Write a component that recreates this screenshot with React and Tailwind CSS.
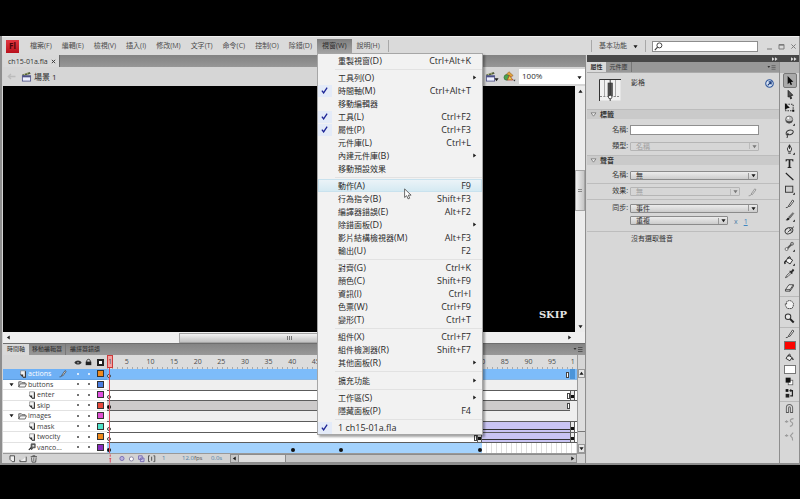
import React from "react";

const FONT = "font-['Open_Sans','Noto_Sans_CJK_TC',sans-serif]";

/* ---------- menu data ---------- */

const topMenus = [
  ["檔案", "(F)"],
  ["編輯", "(E)"],
  ["檢視", "(V)"],
  ["插入", "(I)"],
  ["修改", "(M)"],
  ["文字", "(T)"],
  ["命令", "(C)"],
  ["控制", "(O)"],
  ["除錯", "(D)"],
  ["視窗", "(W)"],
  ["說明", "(H)"],
];

const windowMenu = [
  { items: [{ t: "重製視窗", k: "(D)", s: "Ctrl+Alt+K" }] },
  {
    items: [
      { t: "工具列", k: "(O)", sub: true },
      { t: "時間軸", k: "(M)", s: "Ctrl+Alt+T", on: true },
      { t: "移動編輯器" },
      { t: "工具", k: "(L)", s: "Ctrl+F2", on: true },
      { t: "屬性", k: "(P)", s: "Ctrl+F3", on: true },
      { t: "元件庫", k: "(L)", s: "Ctrl+L" },
      { t: "內建元件庫", k: "(B)", sub: true },
      { t: "移動預設效果" },
    ],
  },
  {
    items: [
      { t: "動作", k: "(A)", s: "F9", hot: true },
      { t: "行為指令", k: "(B)", s: "Shift+F3" },
      { t: "編譯器錯誤", k: "(E)", s: "Alt+F2" },
      { t: "除錯面板", k: "(D)", sub: true },
      { t: "影片結構檢視器", k: "(M)", s: "Alt+F3" },
      { t: "輸出", k: "(U)", s: "F2" },
    ],
  },
  {
    items: [
      { t: "對齊", k: "(G)", s: "Ctrl+K" },
      { t: "顏色", k: "(C)", s: "Shift+F9" },
      { t: "資訊", k: "(I)", s: "Ctrl+I" },
      { t: "色票", k: "(W)", s: "Ctrl+F9" },
      { t: "變形", k: "(T)", s: "Ctrl+T" },
    ],
  },
  {
    items: [
      { t: "組件", k: "(X)", s: "Ctrl+F7" },
      { t: "組件檢測器", k: "(R)", s: "Shift+F7" },
      { t: "其他面板", k: "(R)", sub: true },
    ],
  },
  { tall: true, items: [{ t: "擴充功能", sub: true }] },
  {
    items: [
      { t: "工作區", k: "(S)", sub: true },
      { t: "隱藏面板", k: "(P)", s: "F4" },
    ],
  },
  { items: [{ t: "", k: "1 ch15-01a.fla", on: true }] },
];

/* ---------- small drawings ---------- */

function Tri({ dir = "right", className = "" }) {
  const d = {
    right: "M1.5 0.5 L5 3 L1.5 5.5Z",
    left: "M4.5 0.5 L1 3 L4.5 5.5Z",
    down: "M0.5 1.5 H5.5 L3 5Z",
    up: "M0.5 4.5 H5.5 L3 1Z",
  }[dir];
  return (
    <svg viewBox="0 0 6 6" className={"h-[5px] w-[5px] shrink-0 fill-[#1c1c1c] " + className}>
      <path d={d} />
    </svg>
  );
}

function Clapper({ className = "" }) {
  return (
    <svg viewBox="0 0 12 12" className={"h-[11px] w-[11px] shrink-0 " + className}>
      <path d="M1 4 L9.5 1 L10.5 3 L2 5.6Z" fill="#55603c" />
      <path d="M3 3.4 L4.6 4.6 M6 2.3 L7.6 3.6" stroke="#cdd58a" strokeWidth="1" />
      <rect x="1.5" y="5.2" width="9" height="5.8" fill="#eef0ff" stroke="#4b4f86" strokeWidth="0.9" />
      <rect x="1.5" y="5.2" width="9" height="1.7" fill="#4b4f86" />
    </svg>
  );
}

function Shapes() {
  return (
    <svg viewBox="0 0 14 12" className="h-[11px] w-[13px] shrink-0">
      <path d="M6.4 0.8 L11 5 L6.4 8 L2.6 4.6Z" fill="#e0a23c" stroke="#8c5a26" strokeWidth="0.6" />
      <circle cx="4" cy="7" r="3" fill="#4da34d" stroke="#2c6a35" strokeWidth="0.7" />
      <path d="M7 4.8 L10.6 9.8 H4.6Z" fill="#e2d84a" stroke="#b5432c" strokeWidth="0.9" />
      <path d="M11 9.6 h2.6 l-1.3 1.8Z" fill="#333" />
    </svg>
  );
}

function Sheet() {
  return (
    <svg viewBox="0 0 10 10" className="h-[8px] w-[8px] shrink-0">
      <path d="M2 1 H8 V9 H5 L2 6Z" fill="#f4f4f4" stroke="#777" strokeWidth="0.8" />
      <path d="M1 5.5 H5.2 V9.3Z" fill="#333" />
      <path d="M8 1.5 V9 H5" fill="none" stroke="#333" strokeWidth="1.3" />
    </svg>
  );
}

function Folder() {
  return (
    <svg viewBox="0 0 12 10" className="h-[8px] w-[9px] shrink-0">
      <path d="M1 9 V2 H4.5 L5.5 3.2 H9.5 V5" fill="#ddd" stroke="#444" strokeWidth="1" />
      <path d="M1 9 L3 4.8 H11.3 L9.5 9Z" fill="#f7f7f7" stroke="#444" strokeWidth="1" />
    </svg>
  );
}

function MaskIcon() {
  return (
    <svg viewBox="0 0 10 10" className="h-[8px] w-[8px] shrink-0">
      <path d="M4 1 H9 V6 H6.5 L4.5 8.5 L3.5 7.4Z" fill="#666" stroke="#333" strokeWidth="0.8" />
      <path d="M5.5 2.5 H7.8 V4.6 H5.5Z" fill="#ddd" />
      <path d="M1 8.7 L4 5.8" stroke="#222" strokeWidth="1.4" />
    </svg>
  );
}

const PencilPath = (
  <>
    <path d="M2 10.5 C4 10.5 5 9.5 6 8" fill="none" stroke="#333" strokeWidth="0.9" />
    <path d="M5 8.5 L9.3 2.2 L10.8 3.3 L6.4 9.2Z" fill="#e9e9e9" stroke="#333" strokeWidth="0.9" />
  </>
);

/* ---------- tool icons ---------- */

const corner = <path d="M9.6 11.6 H11.8 V9.4Z" fill="#111" />;
const toolGroups = [
  {
    cls: "h-[67px]",
    items: [
      ["選取", <path d="M4 1 V10 L6 8.2 L7.3 11 L8.8 10.3 L7.6 7.6 L10.2 7.4Z" fill="#0c0c0c" />],
      ["部分選取", <path d="M4.5 1.5 V8.8 L6 7.6 L7.2 10.8 L8.3 10.3 L7.2 7.2 L9.6 6.8Z" fill="#555" stroke="#222" strokeWidth="1" />],
      ["任意變形", <><rect x="2" y="2.5" width="8" height="7" fill="none" stroke="#333" strokeWidth="1.2" strokeDasharray="1.6 1.2" /><path d="M1 1 V8.6 L3 7 L6.4 6.4Z" fill="#111" /><rect x="9" y="8.4" width="2.2" height="2.2" fill="#111" /></>],
      ["3D 旋轉", <><circle cx="5.6" cy="5" r="3.9" fill="#bbb" stroke="#555" strokeWidth="0.8" /><path d="M2 5.4 C4 7.4 7.4 7.4 9.4 5.4 C9.2 8 7.6 8.9 5.6 8.9 C3.6 8.9 2.2 7.4 2 5.4Z" fill="#444" /><circle cx="4.6" cy="3.4" r="1.1" fill="#fff" />{corner}</>],
      ["套索", <path d="M3.2 10.8 C3.6 9.4 4.6 8.6 3.2 7.8 C1.6 7 2 3.4 5.4 2.4 C8.6 1.6 10.6 2.8 10 4.8 C9.4 6.8 6 8 4 7.2 C3.2 6.4 4.6 5.8 5 7" fill="none" stroke="#333" strokeWidth="1.1" />],
    ],
  },
  {
    cls: "h-[94px]",
    items: [
      ["鋼筆", <><path d="M6 0.8 L8.4 5.4 L7.2 8.4 H4.8 L3.6 5.4Z" fill="#ddd" stroke="#222" strokeWidth="0.9" /><path d="M6 1 V5.4 M4.6 10 H7.4" stroke="#222" strokeWidth="1" />{corner}</>],
      ["文字", <path d="M1.8 1.4 H10.2 V3.8 H9.4 C9.2 2.8 8.8 2.4 7.8 2.4 H6.9 V9.4 C6.9 10 7.3 10.2 8.2 10.3 V10.9 H3.8 V10.3 C4.7 10.2 5.1 10 5.1 9.4 V2.4 H4.2 C3.2 2.4 2.8 2.8 2.6 3.8 H1.8Z" fill="#222" />],
      ["線段", <path d="M2 2.2 L10.2 9.8" stroke="#222" strokeWidth="1.2" />],
      ["矩形", <><rect x="1.6" y="2.4" width="8" height="6.6" fill="#cfcfcf" stroke="#333" strokeWidth="1" />{corner}</>],
      ["鉛筆", PencilPath],
      ["筆刷", <><path d="M1.6 9.8 C3 9.8 3 7.4 4.8 7 L6.2 8.4 C5.6 10.2 3.4 10.8 1.6 9.8Z" fill="#222" /><path d="M5.2 6.6 L9.6 1.8 L10.6 2.8 L6.6 7.8Z" fill="#888" stroke="#333" strokeWidth="0.6" />{corner}</>],
      ["裝飾", <><ellipse cx="5.4" cy="6.2" rx="4.4" ry="3.2" transform="rotate(-25 5.4 6.2)" fill="#ddd" stroke="#333" strokeWidth="1" /><path d="M4 8 L10.8 1.8 M6 3.2 L8 7" stroke="#333" strokeWidth="1" /></>],
    ],
  },
  {
    cls: "h-[54px]",
    items: [
      ["骨塊", <><path d="M2.4 9.4 L8.6 3.2" stroke="#555" strokeWidth="2" /><circle cx="2.8" cy="8.8" r="1.6" fill="#eee" stroke="#555" strokeWidth="0.8" /><circle cx="8.8" cy="3" r="1.6" fill="#aaa" stroke="#555" strokeWidth="0.8" />{corner}</>],
      ["油漆桶", <><path d="M4.6 2.4 L9.4 5.6 L6.6 9.8 L2 6.8Z" fill="#f4f4f4" stroke="#222" strokeWidth="1" /><path d="M2.4 6.4 C0.6 6.8 0.6 8.6 1.4 9.8" fill="none" stroke="#111" strokeWidth="1.5" /><path d="M5 4.4 C5 1 7 0.8 7.2 3.8" fill="none" stroke="#222" strokeWidth="0.9" />{corner}</>],
      ["滴管", <><path d="M1.6 10.6 L3 8 L6.8 4.4 L8 5.6 L4.2 9.4Z" fill="#ddd" stroke="#333" strokeWidth="0.8" /><path d="M6.2 3.6 L8.2 3.6 L9.6 1.4 L11 2.6 L8.8 4.4 L8.8 6.2Z" fill="#222" stroke="#222" strokeWidth="0.8" /></>],
      ["橡皮擦", <path d="M1.6 8.4 L5.4 3 H10.2 L6.6 8.4Z M1.6 8.4 V10 H6.6 L10.2 4.8 V3 M6.6 8.4 V10" fill="#f0f0f0" stroke="#333" strokeWidth="0.9" />],
    ],
  },
  {
    cls: "h-[28px]",
    items: [
      ["手形", <path d="M3.6 10.4 L1.6 7.2 L1.4 5.2 L2.8 5.6 L2.8 3 L4.2 2.4 L5.4 1.6 L6.8 1.8 L8.2 2.4 L9.6 3.6 L10.4 5 L10 8 L8.6 10.4Z" fill="#f2f2f2" stroke="#444" strokeWidth="1" strokeDasharray="1.8 0.5" />],
      ["縮放顯示", <><circle cx="4.4" cy="4.2" r="3" fill="#e8e8e8" stroke="#333" strokeWidth="1.1" /><path d="M6.6 6.4 L10.6 10.4" stroke="#222" strokeWidth="2.2" /></>],
    ],
  },
  {
    cls: "h-[71px]",
    items: [
      ["筆畫顏色", PencilPath],
      ["筆畫色票", "bg-[#fb0400]"],
      ["填色", <><path d="M4.6 3.4 L8.8 6 L6.4 9.6 L2.2 7Z" fill="#eee" stroke="#222" strokeWidth="1" /><path d="M9.4 5.6 L10.8 8.8 L8.6 8.2Z" fill="#222" /><path d="M5 5 C5 1.4 7 1.4 7 4.6" fill="none" stroke="#222" strokeWidth="0.9" /></>],
      ["填色色票", "bg-white"],
      ["黑白", <><rect x="4.6" y="4.6" width="5" height="5" fill="#fff" stroke="#555" strokeWidth="0.8" /><rect x="1.8" y="1.8" width="5.4" height="5.4" fill="#111" /></>],
      ["交換顏色", <><rect x="1.8" y="1.2" width="3" height="3" fill="#111" /><rect x="1.8" y="6.4" width="4" height="4" fill="#222" /><path d="M6 2.8 H9.2 V8.6 H6.8 M7.4 1.4 V4.2" fill="none" stroke="#222" strokeWidth="1.3" /></>],
    ],
  },
  {
    cls: "h-[41px]",
    items: [
      ["貼齊物件", <><path d="M2.6 10.4 V5 C2.6 0.6 9.4 0.6 9.4 5 V10.4 M5 10.4 V5.4 C5 3.8 7 3.8 7 5.4 V10.4" fill="none" stroke="#666" strokeWidth="1.1" /><path d="M2.2 10.4 H5.2 M6.8 10.4 H9.8" stroke="#555" strokeWidth="1.2" /></>],
      ["平滑", <path d="M1 5 H4.6 M2.8 3.6 V6.4 M10.4 1.8 C5.6 2.4 6.4 5 8.4 5.8 C10.4 7 9.6 9.6 6.4 10.2" fill="none" stroke="#9c9c9c" strokeWidth="1.2" />],
      ["拉直", <path d="M1 5 H4.6 M2.8 3.6 V6.4 M10 1.8 L7 5.2 L9 7.4 L9.4 10.4" fill="none" stroke="#9c9c9c" strokeWidth="1.2" />],
    ],
  },
];

/* ---------- window menu ---------- */

function WindowMenu() {
  return (
    <div
      role="menu"
      aria-label="視窗"
      className="absolute left-0 top-full z-20 w-[166px] border border-[#a6a6a6] bg-[#f2f2f2] shadow-[2px_2px_2px_rgba(0,0,0,0.35)]"
    >
      {windowMenu.map((g, gi) => (
        <div key={gi}>
          {gi > 0 && (
            <div className={(g.tall ? "h-[5px]" : "h-[4px]") + " flex items-center pl-[17px]"}>
              <hr className="w-full border-t border-[#e2e2e2]" />
            </div>
          )}
          {g.items.map((it) => (
            <button
              key={it.t}
              type="button"
              role={it.on ? "menuitemcheckbox" : "menuitem"}
              aria-checked={it.on ? true : undefined}
              className={
                "flex h-[13px] w-full items-center pr-[4px] text-left text-[9px] leading-[13px] text-[#2a2a2a] " +
                (it.hot ? "bg-linear-to-b from-[#edf4f8] to-[#d3e9f2] outline outline-[#c9e2ee] -outline-offset-1" : "")
              }
            >
              <span
                className={
                  "mr-[6px] flex h-[12px] w-[14px] items-center justify-center " + (it.on ? "bg-[#e4ebf8]" : "")
                }
              >
                {it.on && (
                  <svg viewBox="0 0 8 8" className="h-[7px] w-[7px]">
                    <path d="M1 4.2 L3 6.8 L7 0.8" fill="none" stroke="#1d2596" strokeWidth="1.5" />
                  </svg>
                )}
              </span>
              <span className="flex-1 whitespace-nowrap">
                <span className="text-[8px]">{it.t}</span>
                {it.k}
              </span>
              {it.s && <span className="pr-[7px]">{it.s}</span>}
              {it.sub && <Tri className="mr-px" />}
            </button>
          ))}
        </div>
      ))}
    </div>
  );
}

function MenuBar() {
  return (
    <header className="flex h-[19px] shrink-0 items-center border-t border-[#efefef] bg-[#dadada] pl-[4px] text-[#4a4a4a]">
      <div className="mr-[6px] flex h-[13px] w-[13px] items-center justify-center bg-linear-to-b from-[#e03540] to-[#b90f1c] text-[8px] font-bold leading-none text-[#4c0308]">
        Fl
      </div>
      <nav className="flex h-[14px]">
        {topMenus.map(([t, k]) => {
          const open = t === "視窗";
          return (
            <div key={t} className="relative flex">
              <button
                type="button"
                aria-expanded={open}
                className={
                  "block h-[14px] whitespace-nowrap px-[5px] text-[7px] leading-[14px] " +
                  (open ? "bg-linear-to-b from-[#7e7e7e] to-[#a3a3a3] text-[#2e2e2e]" : "")
                }
              >
                {t}
                {k}
              </button>
              {open && <WindowMenu />}
            </div>
          );
        })}
      </nav>
      <div className="ml-[3px] h-[12px] w-px bg-[#a8a8a8]" />
      <div className="flex-1" />
      <div className="h-[12px] w-px bg-[#a8a8a8]" />
      <button type="button" className="flex items-center gap-[6px] px-[7px] text-[7px] leading-[12px]">
        基本功能
        <Tri dir="down" />
      </button>
      <div className="h-[12px] w-px bg-[#a8a8a8]" />
      <label className="ml-[6px] flex h-[11px] w-[106px] items-center border border-[#8d8d8d] bg-white px-px">
        <svg viewBox="0 0 9 9" className="h-[9px] w-[9px] shrink-0" fill="none" stroke="#444">
          <circle cx="5.4" cy="3.4" r="2.5" strokeWidth="1" />
          <path d="M3.6 5.2 L0.8 8.2" strokeWidth="1.2" />
        </svg>
        <input type="search" aria-label="搜尋" className="h-[9px] w-full min-w-0 bg-transparent text-[7px] outline-none" />
      </label>
      <div className="ml-[5px] flex">
        {[
          ["最小化", "M2 7 H7"],
          ["最大化", "M2 2.5 H7 V7 H2Z M2 3.2 H7"],
          ["關閉", "M2.4 2.4 L6.6 6.6 M6.6 2.4 L2.4 6.6"],
        ].map(([n, d]) => (
          <button key={n} type="button" aria-label={n} className="flex h-[12px] w-[12px] items-center justify-center">
            <svg viewBox="0 0 9 9" className="h-[9px] w-[9px]" fill="none" stroke="#7c7c7c" strokeWidth="1">
              <path d={d} />
            </svg>
          </button>
        ))}
      </div>
    </header>
  );
}

/* ---------- document area ---------- */

function DocumentArea() {
  return (
    <section className="flex min-h-0 flex-1 flex-col">
      <div className="flex h-[12px] shrink-0 bg-linear-to-b from-[#828282] to-[#979797]">
        <div className="flex items-center gap-[3px] border-r border-[#6b6b6b] bg-[#d9d9d9] pl-[5px] pr-[3px] text-[7px] leading-[11px] text-[#333]">
          ch15-01a.fla
          <button type="button" aria-label="關閉文件">
            <svg viewBox="0 0 6 6" className="h-[5px] w-[5px]" stroke="#333" strokeWidth="1.1">
              <path d="M1 1 L5 5 M5 1 L1 5" />
            </svg>
          </button>
        </div>
      </div>
      <div className="flex h-[19px] shrink-0 items-center bg-[#d6d6d6] pl-[4px] text-[8px] text-[#2c2c2c]">
        <svg viewBox="0 0 9 7" className="mr-[5px] h-[7px] w-[9px]" fill="none" stroke="#bcbcbc" strokeWidth="1.4">
          <path d="M8.5 3.5 H1.5 M4 1 L1.4 3.5 L4 6" />
        </svg>
        <Clapper />
        <span className="ml-[2px]">場景 1</span>
        <div className="flex-1" />
        <button type="button" aria-label="編輯場景" className="mr-[4px] flex items-end">
          <Clapper />
          <Tri dir="down" className="-ml-[2px]" />
        </button>
        <button type="button" aria-label="編輯元件">
          <Shapes />
        </button>
        <div className="relative ml-[3px] flex h-[15px] w-[66px] items-center bg-white">
          <select aria-label="縮放" className="h-full w-full appearance-none bg-transparent pb-px pl-[3px] text-[8px] outline-none">
            <option>100%</option>
          </select>
          <Tri dir="down" className="pointer-events-none absolute right-[3px] top-[6px]" />
        </div>
      </div>
      <div className="flex min-h-0 flex-1">
        <div className="flex flex-1 items-end justify-end bg-black pb-[11px] pr-[8px]">
          <span className="font-['DejaVu_Serif',serif] text-[10px] font-bold leading-[12px] text-[#e4e4e4]">SKIP</span>
        </div>
        <div className="flex w-[10px] flex-col items-center bg-[#ececec] py-[3px]">
          <Tri dir="up" />
          <div className="flex-1" />
          <div className="flex h-[41px] w-[10px] flex-col items-center justify-center gap-px border border-[#a5a5a5] bg-linear-to-r from-[#f0f0f0] to-[#c6c6c6]">
            <i className="h-px w-[4px] bg-[#888]" />
            <i className="h-px w-[4px] bg-[#888]" />
          </div>
          <div className="flex-[1.5]" />
          <Tri dir="down" />
        </div>
      </div>
      <div className="flex h-[11px] shrink-0 items-center bg-[#efefef] pl-[3px] pr-[13px]">
        <Tri dir="left" />
        <div className="flex-[168]" />
        <div className="flex h-[10px] flex-[218] items-center justify-center gap-px border border-[#a5a5a5] bg-linear-to-b from-[#f2f2f2] to-[#c2c2c2]">
          <i className="h-[4px] w-px bg-[#777]" />
          <i className="h-[4px] w-px bg-[#777]" />
          <i className="h-[4px] w-px bg-[#777]" />
        </div>
        <div className="flex-[168]" />
        <Tri />
      </div>
    </section>
  );
}

/* ---------- timeline ---------- */

const layers = [
  { n: "actions", kind: "sheet", c: "bg-[#f08a1c]", sel: true },
  { n: "buttons", kind: "folder", c: "bg-[#4a7de0]" },
  { n: "enter", kind: "sheet", c: "bg-[#e04fe0]", deep: true },
  { n: "skip", kind: "sheet", c: "bg-[#e8483c]", deep: true },
  { n: "images", kind: "folder", c: "bg-[#e04fd2]" },
  { n: "mask", kind: "sheet", c: "bg-[#4fe4cc]", deep: true },
  { n: "twocity", kind: "sheet", c: "bg-[#f08a1c]", deep: true },
  { n: "vanco...", kind: "mask", c: "bg-[#8a2cc0]", deep: true },
];

function LayerRow({ l }) {
  const pad = l.deep ? "pl-[25px]" : l.sel ? "pl-[16px]" : "pl-[6px]";
  const dot = "h-[2px] w-[2px] rounded-full " + (l.sel ? "bg-white" : "bg-[#444]");
  return (
    <div
      className={
        "flex min-h-0 flex-1 basis-0 items-center border-b text-[7px] leading-[9px] " +
        (l.sel ? "border-[#5f9fe0] bg-[#6eb0f5] text-white " : "border-[#e2e2e2] bg-white text-[#3b3b3b] ") +
        pad
      }
    >
      {l.kind === "folder" && <Tri dir="down" className="mr-[4px]" />}
      {l.kind === "folder" ? <Folder /> : l.kind === "mask" ? <MaskIcon /> : <Sheet />}
      <span className="ml-px flex-1 whitespace-nowrap">{l.n}</span>
      {l.sel && (
        <svg viewBox="0 0 12 12" className="mr-[5px] h-[9px] w-[9px]">
          {PencilPath}
        </svg>
      )}
      <span className="flex w-[11px] justify-center">
        <i className={dot} />
      </span>
      <span className="flex w-[11px] justify-center">
        <i className={dot} />
      </span>
      <span className="flex w-[12px] justify-center">
        <i className={"h-[7px] w-[7px] border border-[#333] " + l.c} />
      </span>
      <span className="w-px" />
    </div>
  );
}

const line = "border-b border-[#5c5c5c]";
const Dot = ({ open }) => (
  <i className={"mb-px h-[4px] w-[4px] shrink-0 self-end rounded-full " + (open ? "border border-[#444] bg-white" : "bg-[#111]")} />
);
const EndBox = () => <i className="mb-px h-[6px] w-[3px] shrink-0 self-end border border-[#444] bg-white" />;
const KeyCell = () => (
  <span className="flex h-full w-[5px] items-end justify-center border-x border-[#5c5c5c] bg-[#e8e8e8]">
    <i className="mb-[2px] h-[3px] w-[3px] bg-[#111]" />
  </span>
);

function Frames() {
  const row = "flex min-h-0 flex-1 basis-0 items-center ";
  return (
    <div className="flex h-[84px] flex-col">
      <div className={row + "border-b border-[#8bb8e4] bg-[#7dbcfa]"}>
        <Dot open />
        <span className="flex-1" />
        <EndBox />
        <span className="ml-px h-full w-[5px] bg-[#4c94d8]" />
        <span className="w-[2px]" />
      </div>
      <div className={row + "bg-[#efefef] " + line} />
      <div className={row + "bg-white " + line}>
        <Dot open />
        <span className="flex-1" />
        <EndBox />
        <KeyCell />
        <span className="w-[2px]" />
      </div>
      <div className={row + "bg-[#efefef]"}>
        <span className={"flex h-full flex-1 bg-[#cdcbcb] " + line}>
          <Dot />
          <span className="flex-1" />
          <EndBox />
        </span>
        <span className="w-[7px]" />
      </div>
      <div className={row + "bg-[#efefef] " + line} />
      <div className={row + "bg-white " + line}>
        <Dot open />
        <span className="flex-[368]" />
        <span className="flex h-full flex-[95] items-end bg-[#c9c4f3] pb-[2px]">
          <i className="h-px w-full bg-[#333]" />
        </span>
        <KeyCell />
        <span className="w-[2px]" />
      </div>
      <div className={row + "bg-white " + line}>
        <Dot open />
        <span className="flex-[362]" />
        <EndBox />
        <KeyCell />
        <span className="flex h-full flex-[88] items-end bg-[#c9c4f3] pb-[2px]">
          <i className="h-px w-full bg-[#333]" />
        </span>
        <KeyCell />
        <span className="w-[2px]" />
      </div>
      <div className={row + "bg-white"}>
        <span className="flex h-full flex-[374] items-end bg-[#a3d2fd]">
          <Dot />
          <span className="flex-[180]" />
          <Dot />
          <span className="flex-[43]" />
          <Dot />
          <span className="flex-[135]" />
          <Dot />
        </span>
        <span className="h-full flex-[95] bg-[repeating-linear-gradient(90deg,#fff_0_4px,#dedede_4px_5px)]" />
      </div>
    </div>
  );
}

function Timeline() {
  const ticks = [];
  for (let n = 5; n <= 95; n += 5) ticks.push(n);
  return (
    <section className="flex shrink-0 flex-col">
      <div className="flex h-[12px] items-stretch border-t border-[#6e6e6e] bg-linear-to-b from-[#848484] to-[#989898] text-[6px] leading-[11px] text-[#2c2c2c]">
        <button type="button" className="bg-[#d9d9d9] px-[4px]">時間軸</button>
        <button type="button" className="border-r border-[#777] px-[3px]">移動編輯器</button>
        <button type="button" className="px-[4px]">編譯器錯誤</button>
        <span className="flex-1" />
        <svg viewBox="0 0 10 6" className="mr-[2px] mt-[2px] h-[6px] w-[10px]" stroke="#444">
          <path d="M0.5 2 H3.5 L2 4Z" fill="#333" stroke="none" />
          <path d="M5 1.5 H9.5 M5 3.5 H9.5 M5 5.5 H9.5" strokeWidth="0.8" />
        </svg>
      </div>
      <div className="flex">
        <div className="w-[104px] shrink-0">
          <div className="flex h-[14px] items-center justify-end bg-[#d6d6d6] pr-[3px]">
            <svg viewBox="0 0 10 8" className="mr-[3px] h-[7px] w-[8px]">
              <path d="M0.5 4 C2 0.5 8 0.5 9.5 4 C8 7.5 2 7.5 0.5 4Z" fill="#333" />
              <circle cx="5" cy="4.4" r="1" fill="#bbb" />
            </svg>
            <svg viewBox="0 0 8 8" className="mr-[5px] h-[8px] w-[7px]">
              <path d="M2 4 V2.6 C2 0.4 6 0.4 6 2.6 V4" fill="none" stroke="#333" strokeWidth="1.1" />
              <rect x="0.8" y="3.6" width="6.4" height="4" fill="#222" />
            </svg>
            <i className="h-[7px] w-[7px] border-2 border-[#222] bg-white" />
          </div>
          <div className="flex h-[84px] flex-col">
            {layers.map((l) => (
              <LayerRow key={l.n} l={l} />
            ))}
          </div>
        </div>
        <div className="relative min-w-0 flex-1">
          <div className="flex h-[14px] items-start bg-[#dcdcdc] bg-[repeating-linear-gradient(90deg,#a9a9a9_0_1px,transparent_1px_5px)] bg-[length:100%_2px] bg-bottom bg-no-repeat text-center text-[7px] leading-[13px] text-[#4a4a4a]">
            <span className="h-[13px] w-[6px] border border-[#cc3a3a] bg-[#f3a0a0] leading-[11px]">1</span>
            <span className="w-[2px]" />
            {ticks.map((n) => (
              <span key={n} className="min-w-0 flex-1">
                {n}
              </span>
            ))}
            <span className="w-[13px] pr-[2px] text-right">1</span>
          </div>
          <Frames />
          <i className="absolute bottom-0 left-[2px] top-[13px] w-px bg-[#d94b5b]" />
        </div>
        <div className="flex w-[8px] shrink-0 flex-col items-center justify-between border-l border-[#9c9c9c] bg-[#d6d6d6] pt-[14px]">
          <button type="button" aria-label="向上捲動" className="flex h-[9px] w-full items-center justify-center border border-[#999] bg-[#e6e6e6]">
            <Tri dir="up" />
          </button>
          <span className="w-full flex-1 border-b border-[#777] bg-[#dedede]" />
          <span className="h-[12px]" />
          <button type="button" aria-label="向下捲動" className="flex h-[9px] w-full items-center justify-center border border-[#999] bg-[#e6e6e6]">
            <Tri dir="down" />
          </button>
        </div>
      </div>
      <div className="flex h-[10px] items-center border-t border-[#999] bg-[#d3d3d3] pl-[5px] text-[6px] leading-[9px]">
        <svg viewBox="0 0 34 10" className="h-[9px] w-[31px]" fill="#f0f0f0" stroke="#444" strokeWidth="1">
          <path d="M2 2 H7 V8.5 H4.5 L2 6Z" />
          <path d="M13 8.5 H20 V3 M13 8.5 V6.5" />
          <path d="M25 3 H32 M27 2 H30 M26 4 L26.5 9 H30.5 L31 4 M28.5 4 V8" />
        </svg>
        <span className="w-[69px]" />
        <svg viewBox="0 0 60 10" className="h-[9px] w-[54px]" fill="none" strokeWidth="1.1">
          <path d="M2.5 0.5 V3 M1.5 5 H3.5 M2.5 5 V9.5" stroke="#d94b5b" />
          <g stroke="#7a70b4">
            <circle cx="15.5" cy="5" r="2.3" fill="#b9b2dc" />
            <circle cx="26" cy="5.5" r="2.3" fill="#fff" stroke="#8a86a6" />
            <path d="M34 2 H38 V6 H34Z M36 4.5 H40 V8.5 H36Z" fill="#cdc8ea" />
            <path d="M46.5 2 H45 V8.5 H46.5 M50.5 2 H52 V8.5 H50.5 M48.5 3 V7.5" stroke="#555" />
          </g>
        </svg>
        <span className="w-[20px] text-[#4d7fa8]">1</span>
        <span className="text-[#4d7fa8]">12.0</span>
        <span className="w-[17px] text-[#555]">fps</span>
        <span className="w-[19px] text-[#4d7fa8]">0.0s</span>
        <div className="flex h-[9px] flex-1 items-center border border-[#8c8c8c] bg-[#c6c6c6]">
          <button type="button" aria-label="向左捲動" className="flex h-full w-[8px] items-center justify-center border-r border-[#8c8c8c]">
            <Tri dir="left" />
          </button>
          <span className="h-full w-[47px] border-r border-[#8c8c8c] bg-[#e0e0e0]" />
          <span className="flex-1" />
          <Tri className="mr-px" />
        </div>
        <span className="w-[8px]" />
      </div>
    </section>
  );
}

/* ---------- properties panel ---------- */

function Field({ id, label, children, rule = "" }) {
  return (
    <div className={"flex h-[16px] items-center pl-[8px] " + rule}>
      <label htmlFor={id} className="w-[35px] pr-[2px] text-right">
        {label}
      </label>
      {children}
    </div>
  );
}

function Drop({ id, value, disabled, width = "w-[128px]" }) {
  return (
    <span className={"relative flex h-[9px] items-center " + width}>
      <select
        id={id}
        aria-label={value}
        disabled={disabled}
        className={
          "h-[9px] w-full appearance-none rounded-[1px] border pl-[5px] text-[7px] leading-[7px] opacity-100 outline-none " +
          (disabled
            ? "border-[#b5b5b5] bg-[#d6d6d6] text-[#a0a0a0]"
            : "border-[#8b8b8b] bg-linear-to-b from-[#ececec] to-[#cccccc] text-[#333]")
        }
      >
        <option>{value}</option>
      </select>
      <span className={"pointer-events-none absolute right-[9px] h-[6px] w-px " + (disabled ? "bg-[#bbb]" : "bg-[#999]")} />
      <Tri dir="down" className={"pointer-events-none absolute right-[2px] " + (disabled ? "opacity-50" : "")} />
    </span>
  );
}

function Section({ title }) {
  return (
    <h3 className="flex h-[10px] items-center gap-[3px] border-t border-[#bcbcbc] bg-[#cacaca] pl-[3px] font-bold leading-[9px]">
      <svg viewBox="0 0 8 6" className="h-[5px] w-[7px]" fill="#f0f0f0" stroke="#777">
        <path d="M1 1 H7 L4 5Z" />
      </svg>
      {title}
    </h3>
  );
}

function Properties() {
  return (
    <aside className="flex w-[193px] flex-col border-r border-[#8e8e8e] bg-[#d7d7d7] text-[7px] text-[#333]">
      <div className="flex h-[11px] items-stretch border-b border-[#aaa] bg-[#989898] leading-[10px]">
        <button type="button" className="w-[19px] bg-[#dadada] text-[6px] font-bold">屬性</button>
        <button type="button" className="w-[26px] border-r border-[#777] text-[6px]">元件庫</button>
        <span className="flex-1" />
        <svg viewBox="0 0 10 6" className="mr-[3px] mt-[2px] h-[6px] w-[9px]" stroke="#555">
          <path d="M0.5 2 H3.5 L2 4Z" fill="#333" stroke="none" />
          <path d="M5 1.5 H9.5 M5 3.5 H9.5 M5 5.5 H9.5" strokeWidth="0.8" />
        </svg>
      </div>
      <div className="mx-px flex h-[36px] items-start pl-[11px] pr-[4px] pt-[6px]">
        <svg viewBox="0 0 22 22" className="h-[22px] w-[22px] shrink-0">
          <rect x="0.5" y="0.5" width="21" height="21" fill="#f2f2f2" />
          <path d="M0.5 22 V0.5 H22" fill="none" stroke="#333" />
          <path d="M5.5 1 V18 M16.5 1 V18" stroke="#aaa" />
          <rect x="9" y="4" width="4.4" height="13" fill="#555" stroke="#333" strokeWidth="0.6" />
          <path d="M11.2 0 V22" stroke="#333" strokeWidth="0.9" />
          <path d="M1 17.5 H21" stroke="#888" strokeDasharray="2 1.4" />
          <circle cx="11.2" cy="18" r="1.8" fill="#fff" stroke="#333" strokeWidth="0.8" />
        </svg>
        <span className="ml-[10px] flex-1 leading-[8px]">影格</span>
        <button type="button" aria-label="說明">
          <svg viewBox="0 0 10 10" className="h-[9px] w-[9px]">
            <circle cx="5" cy="5" r="4.2" fill="#dce6f4" stroke="#2d559a" strokeWidth="1.2" />
            <path d="M3 7 L6.6 3.4 M4 3.2 H6.8 V6" fill="none" stroke="#1d3f80" strokeWidth="1.3" />
          </svg>
        </button>
      </div>
      <Section title="標籤" />
      <div className="pb-px pt-[3px]">
        <Field id="label-name" label="名稱:">
          <input id="label-name" type="text" className="h-[10px] w-[129px] border border-[#8f8f8f] bg-white px-[2px] text-[7px] outline-none" />
        </Field>
        <Field id="label-type" label="類型:">
          <Drop id="label-type" value="名稱" disabled width="w-[129px]" />
        </Field>
      </div>
      <Section title="聲音" />
      <div className="pt-[3px]">
        <Field id="sound-name" label="名稱:" rule="border-b border-[#bdbdbd]">
          <Drop id="sound-name" value="無" />
        </Field>
        <Field id="sound-effect" label="效果:" rule="border-b border-[#bdbdbd]">
          <Drop id="sound-effect" value="無" disabled width="w-[110px]" />
          <svg viewBox="0 0 12 12" className="ml-[7px] h-[10px] w-[10px] opacity-50">
            {PencilPath}
          </svg>
        </Field>
        <Field id="sound-sync" label="同步:">
          <Drop id="sound-sync" value="事件" />
        </Field>
        <div className="flex h-[16px] items-start border-b border-[#bdbdbd] pl-[43px]">
          <Drop id="sound-repeat" value="重複" width="w-[98px]" />
          <span className="ml-[6px] mt-[2px] leading-[8px] text-[#4d7fa8]">x</span>
          <span className="ml-[6px] mt-[2px] leading-[8px] text-[#3e86c0] underline">1</span>
        </div>
        <p className="pl-[44px] leading-[13px]">沒有選取聲音</p>
      </div>
    </aside>
  );
}

function Tools() {
  return (
    <aside className="flex w-[19px] flex-col bg-[#d7d7d7]" aria-label="工具">
      <div className="h-[11px] bg-[#b4b4b4]" />
      <div className="flex flex-col gap-px">
        {toolGroups.map((g, gi) => (
          <div key={gi} className={"flex flex-col items-center " + g.cls + (gi ? " mt-px box-content border-t border-[#b9b9b9]" : "")}>
            {g.items.map(([name, art], i) => (
              <button
                key={name}
                type="button"
                aria-label={name}
                className={
                  "flex min-h-0 w-[14px] flex-1 items-center justify-center " +
                  (gi === 0 && i === 0 ? "rounded-[2px] border border-[#777] bg-[#a9a9a9]" : "")
                }
              >
                {typeof art === "string" ? (
                  <span className={"h-[9px] w-[12px] border border-[#777] " + art} />
                ) : (
                  <svg viewBox="0 0 12 12" className="h-[11px] w-[11px]">
                    {art}
                  </svg>
                )}
              </button>
            ))}
          </div>
        ))}
      </div>
    </aside>
  );
}

export default function App() {
  return (
    <div className={"flex h-screen flex-col overflow-hidden bg-black pb-[34px] pt-[36px] " + FONT}>
      <div className="flex min-h-0 flex-1 flex-col border-b-2 border-l-2 border-r border-[#8e8e8e] bg-[#d4d4d4]">
        <MenuBar />
        <div className="flex min-h-0 flex-1">
          <main className="ml-px flex min-w-0 flex-1 flex-col border-r border-[#8e8e8e]">
            <DocumentArea />
            <Timeline />
          </main>
          <div className="ml-px flex flex-col">
            <div className="flex h-[7px] shrink-0 items-center justify-end bg-[#484848]">
              {["收合面板", "收合工具"].map((n) => (
                <button key={n} type="button" aria-label={n} className="mr-[2px] flex w-[17px] justify-end">
                  <svg viewBox="0 0 8 5" className="h-[4px] w-[6px] fill-[#ddd]">
                    <path d="M0 0 L3.4 2.5 L0 5Z M4 0 L7.4 2.5 L4 5Z" />
                  </svg>
                </button>
              ))}
            </div>
            <div className="flex min-h-0 flex-1">
              <Properties />
              <Tools />
            </div>
          </div>
        </div>
      </div>
      {/* mouse pointer resting on the highlighted menu entry */}
      <svg viewBox="0 0 9 13" className="pointer-events-none absolute left-[404px] top-[188px] z-30 h-[12px] w-[8px]">
        <path d="M0.7 0.8 V10.4 L3 8.4 L4.6 12 L6.4 11.2 L4.8 7.8 H8Z" fill="#fff" stroke="#444" strokeWidth="0.9" />
      </svg>
    </div>
  );
}
